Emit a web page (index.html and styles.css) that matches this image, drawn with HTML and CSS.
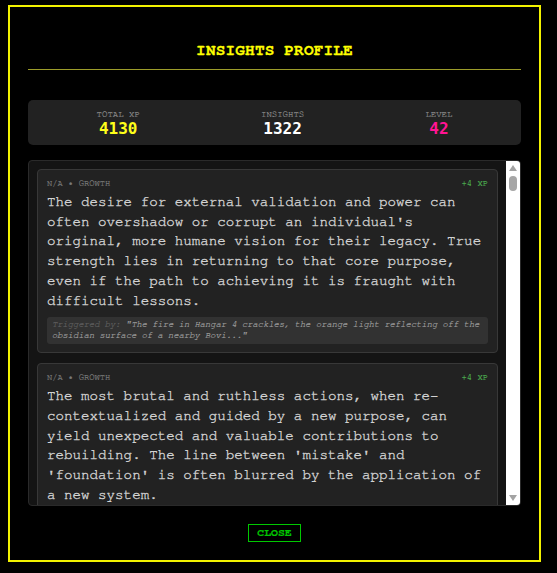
FILE: index.html
```html
<!DOCTYPE html>
<html lang="en">
<head>
<meta charset="utf-8">
<title>Insights Profile</title>
<link rel="stylesheet" href="styles.css">
</head>
<body>
<div class="modal">
  <header class="modal-header">
    <h2 class="modal-title">INSIGHTS PROFILE</h2>
  </header>

  <section class="stats">
    <div class="stat">
      <span class="stat-label">TOTAL XP</span>
      <span class="stat-value stat-xp">4130</span>
    </div>
    <div class="stat">
      <span class="stat-label">INSIGHTS</span>
      <span class="stat-value stat-insights">1322</span>
    </div>
    <div class="stat">
      <span class="stat-label">LEVEL</span>
      <span class="stat-value stat-level">42</span>
    </div>
  </section>

  <section class="list">
    <div class="list-content">
    <article class="card">
      <div class="card-meta"><span>N/A • GROWTH</span><span class="card-xp">+4 XP</span></div>
      <p class="card-text">The desire for external validation and power can often overshadow or corrupt an individual's original, more humane vision for their legacy. True strength lies in returning to that core purpose, even if the path to achieving it is fraught with difficult lessons.</p>
      <div class="card-trigger"><span class="trigger-label">Triggered by:</span> <span class="trigger-quote">"The fire in Hangar 4 crackles, the orange light reflecting off the obsidian surface of a nearby Bovi..."</span></div>
    </article>
    <article class="card">
      <div class="card-meta"><span>N/A • GROWTH</span><span class="card-xp">+4 XP</span></div>
      <p class="card-text">The most brutal and ruthless actions, when re-contextualized and guided by a new purpose, can yield unexpected and valuable contributions to rebuilding. The line between 'mistake' and 'foundation' is often blurred by the application of a new system.</p>
      <div class="card-trigger"><span class="trigger-label">Triggered by:</span> <span class="trigger-quote">"The salvaged plating groans as the crew welds it into a new bulkhead, sparks raining across the..."</span></div>
    </article>
    <article class="card">
      <div class="card-meta"><span>N/A • TRUST</span><span class="card-xp">+3 XP</span></div>
      <p class="card-text">Trust is rarely built in grand gestures. It accumulates quietly through small, repeated acts of reliability, especially in moments when no one is watching and there is nothing obvious to gain from keeping a promise.</p>
      <div class="card-trigger"><span class="trigger-label">Triggered by:</span> <span class="trigger-quote">"Mara hands the last ration pack to the scout without a word, then turns back to the console and..."</span></div>
    </article>
    </div>
    <div class="scrollbar" aria-hidden="true">
      <div class="scroll-btn">
        <svg width="8" height="6" viewBox="0 0 8 6"><polygon points="4,0 8,6 0,6" fill="#a3a3a3"/></svg>
      </div>
      <div class="scroll-track"><div class="scroll-thumb"></div></div>
      <div class="scroll-btn">
        <svg width="8" height="6" viewBox="0 0 8 6"><polygon points="0,0 8,0 4,6" fill="#a3a3a3"/></svg>
      </div>
    </div>
  </section>

  <footer class="actions">
    <button class="close-btn" type="button">CLOSE</button>
  </footer>
</div>
</body>
</html>
```

FILE: styles.css
```css
* {
  box-sizing: border-box;
}

html,
body {
  margin: 0;
  background: #000;
}

body {
  font-family: "Nimbus Mono PS", "Nimbus Mono L", "FreeMono", "Courier New", Courier, "Liberation Mono", monospace;
  color: #cfcfcf;
}

.modal {
  width: 533px;
  height: 557px;
  margin: 5px 0 0 8px;
  border: 2px solid #f2f200;
  padding: 18px;
  display: flex;
  flex-direction: column;
  background: #000;
}

.modal-header {
  padding: 16px 0 10px;
  border-bottom: 1px solid #9c9c2a;
}

.modal-title {
  margin: 0;
  text-align: center;
  font-size: 16px;
  line-height: 18px;
  font-weight: bold;
  color: #ffff00;
  letter-spacing: 0.2px;
  -webkit-text-stroke: 0.3px #ffff00;
}

.stats {
  margin-top: 30px;
  background: #222;
  border-radius: 5px;
  padding: 10px 8px 8px;
  display: flex;
  justify-content: space-around;
}

.stat {
  display: flex;
  flex-direction: column;
  align-items: center;
}

.stat-label {
  font-size: 9px;
  line-height: 10px;
  color: #8a8a8a;
  -webkit-text-stroke: 0.2px #8a8a8a;
}

.stat-value {
  font-family: "DejaVu Sans Mono", monospace;
  font-weight: bold;
  font-size: 16px;
  line-height: 17px;
}

.stat-xp {
  color: #ffff1a;
}

.stat-insights {
  color: #ffffff;
}

.stat-level {
  color: #ff1493;
}

.list {
  margin-top: 15px;
  flex: 1;
  min-height: 0;
  display: flex;
  background: #141414;
  border: 1px solid #2a2a2a;
  border-radius: 4px;
  overflow: hidden;
}

.list-content {
  flex: 1;
  min-width: 0;
  overflow: hidden;
  padding: 8px;
}

.scrollbar {
  width: 14px;
  flex: none;
  display: flex;
  flex-direction: column;
  background: #ffffff;
}

.scroll-btn {
  height: 14px;
  flex: none;
  display: flex;
  align-items: center;
  justify-content: center;
}

.scroll-track {
  flex: 1;
  padding: 1px 3px;
}

.scroll-thumb {
  height: 15px;
  border-radius: 4px;
  background: #a6a6a6;
}

.card {
  background: #222;
  border: 1px solid #383838;
  border-radius: 4px;
  padding: 8px 9px;
  margin-bottom: 10px;
}

.card-meta {
  display: flex;
  justify-content: space-between;
  font-size: 8.8px;
  line-height: 11px;
  color: #7a7a7a;
  -webkit-text-stroke: 0.2px #7a7a7a;
}

.card-xp {
  color: #4caf50;
  -webkit-text-stroke: 0.2px #4caf50;
}

.card-text {
  margin: 4px 0 0;
  font-size: 14.2px;
  line-height: 19.7px;
  color: #d2d2d2;
  -webkit-text-stroke: 0.35px #d2d2d2;
}

.card-trigger {
  margin-top: 6px;
  background: #323232;
  border-radius: 3px;
  padding: 3px 5px;
  font-size: 8.8px;
  line-height: 10.5px;
  font-style: italic;
}

.trigger-label {
  color: #5f5f5f;
  -webkit-text-stroke: 0.2px #5f5f5f;
}

.trigger-quote {
  color: #9c9c9c;
  -webkit-text-stroke: 0.2px #9c9c9c;
}

.actions {
  margin-top: 18px;
  display: flex;
  justify-content: center;
}

.close-btn {
  font-family: inherit;
  font-weight: bold;
  font-size: 11.5px;
  line-height: 14px;
  color: #00c800;
  background: transparent;
  border: 1px solid #00c800;
  border-radius: 0;
  padding: 1px 8px;
  cursor: pointer;
  -webkit-text-stroke: 0.2px #00c800;
}
```
